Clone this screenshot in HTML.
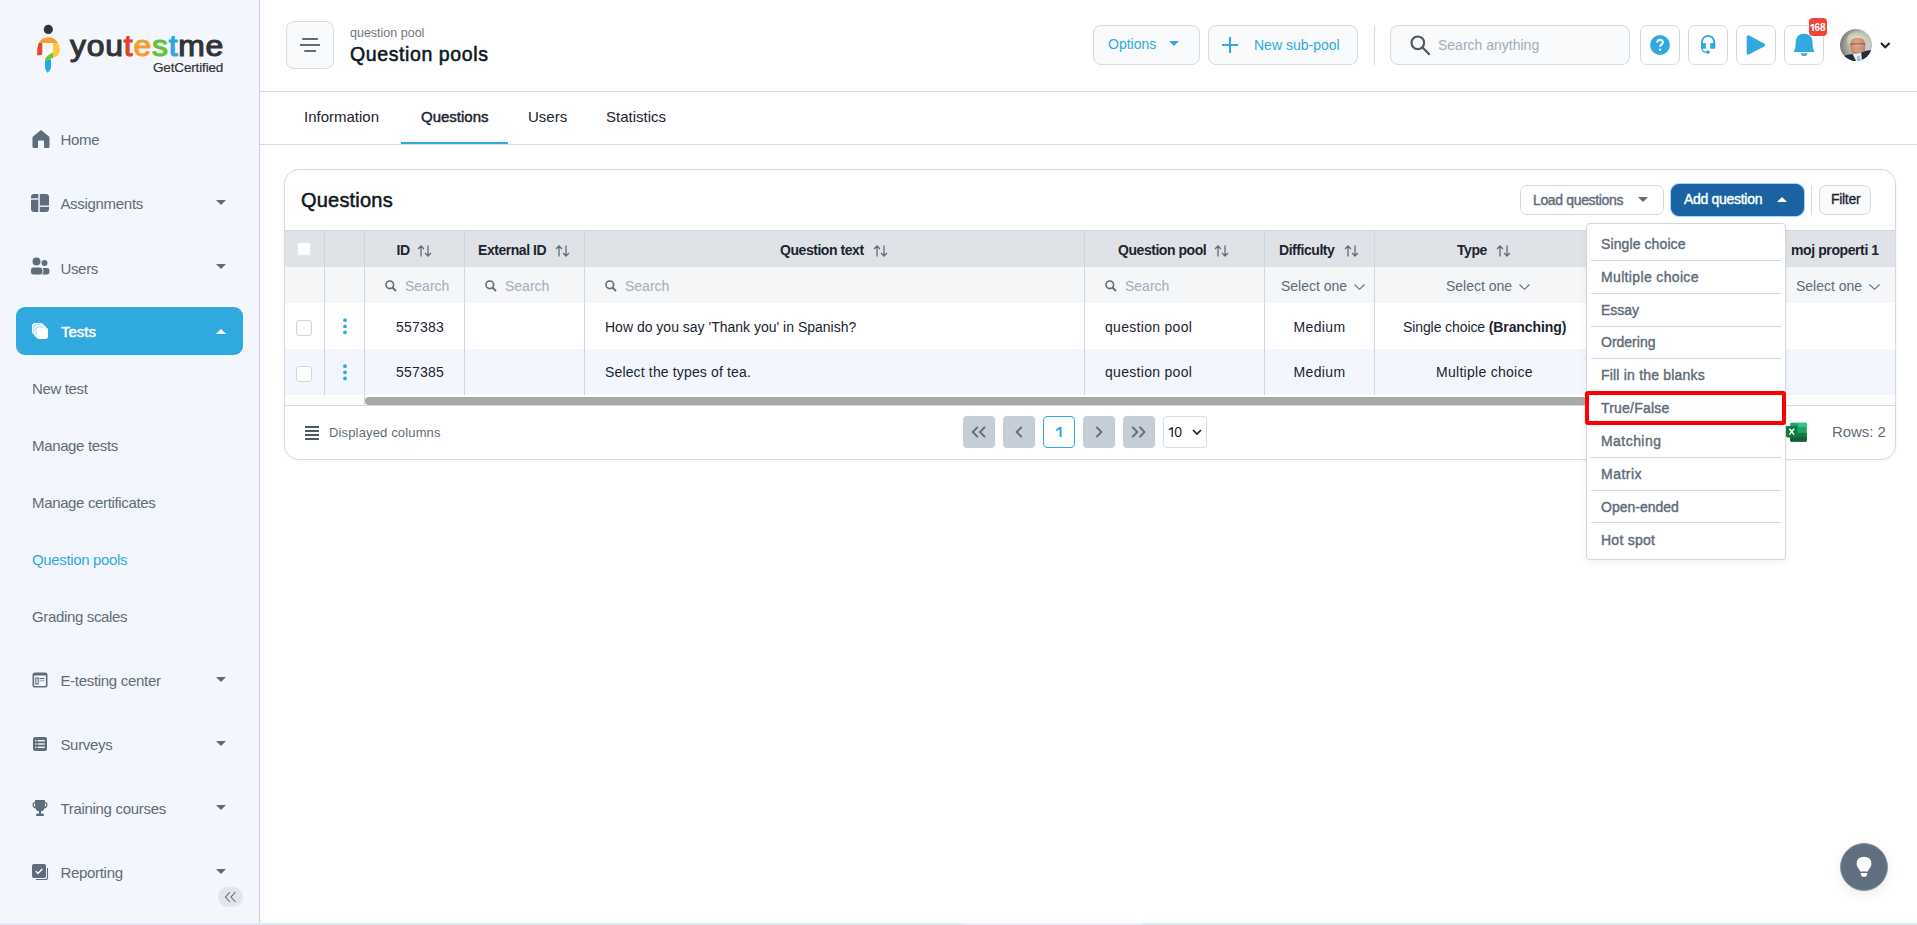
<!DOCTYPE html>
<html><head><meta charset="utf-8"><style>
*{box-sizing:border-box;margin:0;padding:0}
html,body{width:1917px;height:925px;overflow:hidden;background:#fff;font-family:"Liberation Sans",sans-serif;color:#1b2430}
.a{position:absolute;white-space:nowrap}
.t{position:absolute;white-space:nowrap;line-height:1}
svg{position:absolute;overflow:visible}
</style></head><body>
<div class="a" style="left:0;top:0;width:260px;height:923px;background:#f3f7fd;border-right:1px solid #c5cfd9"></div>
<svg style="left:0;top:0" width="260" height="90" viewBox="0 0 260 90">
<circle cx="48.3" cy="29.4" r="4.6" fill="#333"/>
<path d="M38.5 43.5 Q41 37.2 48.5 37.2 Q55 37.2 58 43 L53 43 L41.5 43 Z" fill="#f9a03a"/>
<path d="M38.6 43 L42.3 43 L42.3 53 Q42.3 55.3 40 55.3 L37.2 55.3 Q36.8 48 38.6 43 Z" fill="#e34a2a"/>
<path d="M53 43 L58 43 Q60 46 59.9 50 Q59.6 56 53 57.8 Z" fill="#fdc940"/>
<path d="M45 61 Q45 56 53 52.6 L53 57.8 Q50 59 48.6 60.5 L45 61.5 Z" fill="#6cc93b"/>
<path d="M45 61.3 L51 59.2 L51 67 Q50.5 70.5 47.8 73 Q45 70 45 67 Z" fill="#2aa6e3"/>
</svg>
<div class="t" style="left:70px;top:31.6px;font-size:29px;-webkit-text-stroke:1.1px currentColor;letter-spacing:0.7px;transform:scaleX(1.1);transform-origin:0 0;color:#343434">you<span style="color:#dc4429;-webkit-text-stroke:1.1px #dc4429">t</span><span style="color:#f99c2f;-webkit-text-stroke:1.1px #f99c2f">e</span><span style="color:#62c436;-webkit-text-stroke:1.1px #62c436">s</span><span style="color:#2ba7e2;-webkit-text-stroke:1.1px #2ba7e2">t</span>me</div>
<div class="t" style="left:153px;top:60.6px;font-size:13.5px;letter-spacing:-0.15px;-webkit-text-stroke:0.2px #333;color:#333">GetCertified</div>
<div class="t" style="left:60.4px;top:132.3px;font-size:15px;letter-spacing:-0.3px;color:#5f6c7a">Home</div>
<div class="t" style="left:60.4px;top:196.3px;font-size:15px;letter-spacing:-0.3px;color:#5f6c7a">Assignments</div>
<svg style="left:216px;top:200px" width="10" height="5"><path d="M0 0 L10 0 L5.0 5 Z" fill="#5f6c7a"/></svg>
<div class="t" style="left:60.4px;top:260.8px;font-size:15px;letter-spacing:-0.3px;color:#5f6c7a">Users</div>
<svg style="left:216px;top:264px" width="10" height="5"><path d="M0 0 L10 0 L5.0 5 Z" fill="#5f6c7a"/></svg>
<div class="t" style="left:60.4px;top:673.3px;font-size:15px;letter-spacing:-0.3px;color:#5f6c7a">E-testing center</div>
<svg style="left:216px;top:677px" width="10" height="5"><path d="M0 0 L10 0 L5.0 5 Z" fill="#5f6c7a"/></svg>
<div class="t" style="left:60.4px;top:737.3px;font-size:15px;letter-spacing:-0.3px;color:#5f6c7a">Surveys</div>
<svg style="left:216px;top:741px" width="10" height="5"><path d="M0 0 L10 0 L5.0 5 Z" fill="#5f6c7a"/></svg>
<div class="t" style="left:60.4px;top:801.3px;font-size:15px;letter-spacing:-0.3px;color:#5f6c7a">Training courses</div>
<svg style="left:216px;top:805px" width="10" height="5"><path d="M0 0 L10 0 L5.0 5 Z" fill="#5f6c7a"/></svg>
<div class="t" style="left:60.4px;top:865.3px;font-size:15px;letter-spacing:-0.3px;color:#5f6c7a">Reporting</div>
<svg style="left:216px;top:869px" width="10" height="5"><path d="M0 0 L10 0 L5.0 5 Z" fill="#5f6c7a"/></svg>
<div class="a" style="left:16px;top:307px;width:227px;height:48px;background:#2fa9de;border-radius:9px"></div>
<div class="t" style="left:61px;top:323.6px;font-size:15px;-webkit-text-stroke:0.45px #fff;letter-spacing:0px;color:#fff">Tests</div>
<svg style="left:216px;top:329px" width="10" height="5"><path d="M0 5 L5.0 0 L10 5 Z" fill="#fff"/></svg>
<div class="t" style="left:32px;top:381.3px;font-size:15px;letter-spacing:-0.35px;color:#5f6c7a">New test</div>
<div class="t" style="left:32px;top:438.3px;font-size:15px;letter-spacing:-0.35px;color:#5f6c7a">Manage tests</div>
<div class="t" style="left:32px;top:495.3px;font-size:15px;letter-spacing:-0.35px;color:#5f6c7a">Manage certificates</div>
<div class="t" style="left:32px;top:552.3px;font-size:15px;letter-spacing:-0.35px;color:#2fa9de">Question pools</div>
<div class="t" style="left:32px;top:609.3px;font-size:15px;letter-spacing:-0.35px;color:#5f6c7a">Grading scales</div>
<svg style="left:32px;top:129px" width="18" height="20" viewBox="0 0 18 20"><path d="M9 1 L17 7.5 Q17.5 8 17.5 9 L17.5 17.5 Q17.5 19 16 19 L13 19 Q12 19 12 18 L12 12.5 Q12 11.5 11 11.5 L7 11.5 Q6 11.5 6 12.5 L6 18 Q6 19 5 19 L2 19 Q0.5 19 0.5 17.5 L0.5 9 Q0.5 8 1 7.5 Z" fill="#5f6c7a"/></svg>
<svg style="left:31px;top:194px" width="18" height="18" viewBox="0 0 18 18"><rect x="0" y="0" width="18" height="18" rx="3" fill="#5f6c7a"/><rect x="7.3" y="0" width="1.5" height="18" fill="#f3f7fd"/><rect x="0" y="4.3" width="7.3" height="1.4" fill="#f3f7fd"/><rect x="8.8" y="11.5" width="9.2" height="1.4" fill="#f3f7fd"/></svg>
<svg style="left:30px;top:257px" width="20" height="19" viewBox="0 0 20 19"><circle cx="6.5" cy="4.5" r="4" fill="#5f6c7a"/><circle cx="14.5" cy="6" r="3" fill="#5f6c7a"/><path d="M11 11 L17 11 Q19.5 11 19.5 14 Q19.5 17.5 17 17.5 L12 17.5 Z" fill="#5f6c7a"/><path d="M3 10 L10 10 Q13 10 13 13.5 Q13 18 10 18 L3 18 Q0.3 18 0.3 14 Q0.3 10 3 10 Z" fill="#5f6c7a" stroke="#f3f7fd" stroke-width="1"/></svg>
<svg style="left:31px;top:322px" width="18" height="18" viewBox="0 0 18 18"><rect x="1.6" y="1.6" width="10.5" height="10.5" rx="2.5" fill="#9fd6ef" stroke="#fff" stroke-width="1.3"/><rect x="3.9" y="3.9" width="10.5" height="10.5" rx="2.5" fill="#9fd6ef" stroke="#fff" stroke-width="1.3"/><rect x="5.5" y="5.5" width="11.5" height="11.5" rx="2.5" fill="#fff"/></svg>
<svg style="left:32px;top:672px" width="16" height="16" viewBox="0 0 16 16"><rect x="1.3" y="1.3" width="13.4" height="13.4" rx="1.8" fill="none" stroke="#5f6c7a" stroke-width="1.6"/><rect x="1.3" y="1.3" width="13.4" height="2.2" fill="#5f6c7a"/><rect x="3.8" y="6" width="2.4" height="6" fill="none" stroke="#5f6c7a" stroke-width="1.1"/><rect x="7.5" y="6" width="5" height="1.1" fill="#5f6c7a"/><rect x="7.5" y="8.2" width="5" height="1.1" fill="#5f6c7a" opacity="0.6"/></svg>
<svg style="left:32px;top:736px" width="16" height="16" viewBox="0 0 16 16"><rect x="1" y="1" width="14" height="14" rx="2" fill="#5f6c7a"/><g fill="#f3f7fd"><rect x="3.2" y="4" width="1.4" height="1.4"/><rect x="3.2" y="7.3" width="1.4" height="1.4"/><rect x="3.2" y="10.6" width="1.4" height="1.4"/><rect x="5.8" y="4" width="7" height="1.4"/><rect x="5.8" y="7.3" width="7" height="1.4"/><rect x="5.8" y="10.6" width="7" height="1.4"/></g></svg>
<svg style="left:32px;top:799px" width="16" height="18" viewBox="0 0 16 18"><path d="M3 1 L13 1 L13 3 Q15.5 3 15.5 5 Q15.5 9 12.5 9.5 Q11.5 12 9 12.5 L9 14.5 L10.5 14.5 Q12 14.5 12 16 L12 17 L4 17 L4 16 Q4 14.5 5.5 14.5 L7 14.5 L7 12.5 Q4.5 12 3.5 9.5 Q0.5 9 0.5 5 Q0.5 3 3 3 Z" fill="#5f6c7a"/><path d="M3 4.3 Q1.8 4.3 1.8 5.2 Q1.8 7.5 3.2 8 Z M13 4.3 Q14.2 4.3 14.2 5.2 Q14.2 7.5 12.8 8 Z" fill="#f3f7fd"/></svg>
<svg style="left:32px;top:864px" width="17" height="17" viewBox="0 0 17 17"><path d="M4 15.5 L13.5 15.5 Q15.5 15.5 15.5 13.5 L15.5 4" fill="none" stroke="#5f6c7a" stroke-width="1.1"/><rect x="0" y="0" width="14" height="14" rx="2" fill="#5f6c7a"/><path d="M3.8 7.2 L6 9.4 L10.2 5" fill="none" stroke="#fff" stroke-width="1.5"/></svg>
<div class="a" style="left:218px;top:887px;width:25px;height:20px;background:#e1e6eb;border-radius:10px"></div>
<svg style="left:224px;top:891px" width="13" height="12" viewBox="0 0 13 12"><path d="M6 1 L1.5 6 L6 11 M11.5 1 L7 6 L11.5 11" fill="none" stroke="#5f6c7a" stroke-width="1.1"/></svg>
<div class="a" style="left:0;top:923px;width:1917px;height:2px;background:#e1e9f6"></div>
<div class="a" style="left:964px;top:923px;width:179px;height:2px;background:#eceff8"></div>
<div class="a" style="left:260px;top:91px;width:1657px;height:1px;background:#d3dbe3"></div>
<div class="a" style="left:286px;top:21px;width:48px;height:48px;border:1px solid #d3dbe3;border-radius:8px;background:#f8fafc"></div>
<svg style="left:300px;top:37px" width="21" height="16"><rect x="2.3" y="1" width="15.6" height="2" fill="#5f6c7a"/><rect x="0" y="7" width="20" height="2" fill="#5f6c7a"/><rect x="4.3" y="13" width="11.6" height="2" fill="#5f6c7a"/></svg>
<div class="t" style="left:350px;top:27.2px;font-size:12.5px;color:#6b7784">question pool</div>
<div class="t" style="left:350px;top:44.8px;font-size:19.5px;-webkit-text-stroke:0.55px #0f1720;letter-spacing:0.6px;color:#0f1720">Question pools</div>
<div class="a" style="left:1093px;top:25px;width:107px;height:40px;border:1px solid #d3dbe3;border-radius:8px;background:#f8fafc"></div>
<div class="t" style="left:1108px;top:37.1px;font-size:14px;color:#2fa9de">Options</div>
<svg style="left:1169px;top:41px" width="10" height="5"><path d="M0 0 L10 0 L5 5 Z" fill="#2fa9de"/></svg>
<div class="a" style="left:1208px;top:25px;width:150px;height:40px;border:1px solid #d3dbe3;border-radius:8px;background:#f8fafc"></div>
<svg style="left:1222px;top:37px" width="16" height="16"><rect x="7" y="0" width="2" height="16" fill="#2fa9de"/><rect x="0" y="7" width="16" height="2" fill="#2fa9de"/></svg>
<div class="t" style="left:1254px;top:38.1px;font-size:14px;color:#2fa9de">New sub-pool</div>
<div class="a" style="left:1374px;top:25px;width:1px;height:40px;background:#d3dbe3"></div>
<div class="a" style="left:1390px;top:25px;width:240px;height:40px;border:1px solid #d3dbe3;border-radius:8px;background:#f8fafc"></div>
<svg style="left:1410px;top:35px" width="20" height="20"><circle cx="7.8" cy="7.8" r="6.3" fill="none" stroke="#4d5966" stroke-width="2.2"/><path d="M12.5 12.5 L19 19" stroke="#4d5966" stroke-width="2.4" stroke-linecap="round"/></svg>
<div class="t" style="left:1438px;top:37.6px;font-size:14px;color:#a3adb8">Search anything</div>
<div class="a" style="left:1640px;top:25px;width:40px;height:40px;border:1px solid #d3dbe3;border-radius:7px;background:#fff"></div>
<div class="a" style="left:1688px;top:25px;width:40px;height:40px;border:1px solid #d3dbe3;border-radius:7px;background:#fff"></div>
<div class="a" style="left:1736px;top:25px;width:40px;height:40px;border:1px solid #d3dbe3;border-radius:7px;background:#fff"></div>
<div class="a" style="left:1784px;top:25px;width:40px;height:40px;border:1px solid #d3dbe3;border-radius:7px;background:#fff"></div>
<svg style="left:1650px;top:35px" width="20" height="20"><circle cx="10" cy="10" r="9.9" fill="#2fa9de"/><path d="M7.3 7.6 Q7.3 4.8 10 4.8 Q12.8 4.8 12.8 7.4 Q12.8 8.8 11.3 9.6 Q10.1 10.3 10.1 11.8" fill="none" stroke="#fff" stroke-width="1.9"/><circle cx="10.1" cy="14.7" r="1.2" fill="#fff"/></svg>
<svg style="left:1700px;top:34px" width="17" height="22"><path d="M2 14 L2 8 A6.1 6.1 0 0 1 14.2 8 L14.2 14" fill="none" stroke="#2fa9de" stroke-width="1.9"/><rect x="1" y="9" width="4.9" height="5.8" rx="0.8" fill="#2fa9de"/><rect x="10.2" y="9" width="5" height="5.8" rx="0.8" fill="#2fa9de"/><path d="M2 14 Q2 18.3 6.5 18.2" fill="none" stroke="#2fa9de" stroke-width="1.3"/><circle cx="7.9" cy="18.1" r="1.9" fill="#2fa9de"/></svg>
<svg style="left:1746px;top:34px" width="21" height="22"><path d="M0.7 3.2 Q0.7 0.3 3.3 1.6 L18.1 9.4 Q20.2 10.95 18.1 12.5 L3.3 20.3 Q0.7 21.6 0.7 18.7 Z" fill="#2fa9de"/></svg>
<svg style="left:1793px;top:33px" width="23" height="24"><path d="M11.1 0.8 Q19.4 0.8 19.6 10 L19.7 14 Q19.9 16.3 21.2 17.4 L21.2 19.1 L1 19.1 L1 17.4 Q2.3 16.3 2.5 14 L2.6 10 Q2.8 0.8 11.1 0.8 Z" fill="#2fa9de"/><path d="M7.7 20.2 L14.6 20.2 Q14 23.1 11.15 23.1 Q8.3 23.1 7.7 20.2 Z" fill="#2fa9de"/></svg>
<div class="a" style="left:1809px;top:18px;width:18px;height:18px;background:#f44336;border-radius:4px"></div>
<div class="t" style="left:1814.6px;top:22.5px;font-size:10px;font-weight:bold;letter-spacing:-0.2px;color:#fff">68</div>
<svg style="left:1809px;top:18px" width="8" height="18"><path d="M3.2 6 L3.7 6 L4.9 6 L4.9 13 L3.2 13 L3.2 8 L1.3 8.7 L1.3 7.3 Z" fill="#fff"/></svg>
<svg style="left:1840px;top:29px" width="32" height="32" viewBox="0 0 32 32"><defs><radialGradient id="avbg" cx="0.7" cy="0.5" r="0.8"><stop offset="0" stop-color="#dcdcda"/><stop offset="0.55" stop-color="#b4b4b1"/><stop offset="1" stop-color="#5e5e5b"/></radialGradient><radialGradient id="avf" cx="0.45" cy="0.4" r="0.65"><stop offset="0" stop-color="#e2ae96"/><stop offset="1" stop-color="#b87c66"/></radialGradient><clipPath id="avc"><circle cx="16" cy="16" r="16"/></clipPath></defs>
<g clip-path="url(#avc)"><rect width="32" height="32" fill="url(#avbg)"/>
<path d="M7 12 Q6.5 3.5 16.5 3.8 Q26.5 4 27 12.5 L25 16 L9 16 Z" fill="#cfc8b2"/>
<ellipse cx="17.8" cy="17" rx="7.8" ry="9.2" fill="url(#avf)"/>
<path d="M9 10.5 Q10.5 6.3 17 6.2 Q24 6.2 26 11 Q22 8.8 17 9 Q12.5 9 9 10.5 Z" fill="#dad3bf"/>
<path d="M10 14.5 Q17.5 13.2 25.5 14.2 L25.5 15.8 Q17.5 15 10 16.2 Z" fill="#6e4e40" opacity="0.5"/>
<path d="M14.5 21.3 Q18.5 23.3 22 21" stroke="#f2dcd0" stroke-width="0.8" fill="none" opacity="0.6"/>
<path d="M-1 32 L1 28 Q7 25.5 12.5 25 L16 27.5 L21 24 Q27 20.5 31 21.5 L34 32 Z" fill="#262b35"/>
<path d="M12.8 25.3 L16 32 L22 32 L21.2 23.8 Z" fill="#eeeeec"/>
<path d="M17.2 27.3 L19.6 26.6 L20.6 32 L17.3 32 Z" fill="#9dbde6"/>
</g></svg>
<svg style="left:1880px;top:42px" width="11" height="7"><path d="M1 1 L5.3 5.3 L9.6 1" fill="none" stroke="#1b2430" stroke-width="2"/></svg>
<div class="a" style="left:260px;top:144px;width:1657px;height:1px;background:#d3dbe3"></div>
<div class="t" style="left:304px;top:109.4px;font-size:15px;color:#1b2430">Information</div>
<div class="t" style="left:421px;top:109.4px;font-size:15px;-webkit-text-stroke:0.45px #1b2430;letter-spacing:0px;color:#1b2430">Questions</div>
<div class="t" style="left:528px;top:109.4px;font-size:15px;color:#1b2430">Users</div>
<div class="t" style="left:606px;top:109.4px;font-size:15px;color:#1b2430">Statistics</div>
<div class="a" style="left:401px;top:142px;width:107px;height:2px;background:#2fa9de"></div>
<div class="a" style="left:284px;top:169px;width:1612px;height:291px;border:1px solid #d3dbe3;border-radius:15px;background:#fff;box-shadow:0 1px 3px rgba(60,80,100,0.06)"></div>
<div class="t" style="left:301px;top:190.1px;font-size:20px;-webkit-text-stroke:0.5px #0f1720;letter-spacing:0.2px;color:#0f1720">Questions</div>
<div class="a" style="left:1520px;top:185px;width:144px;height:30px;border:1px solid #d3dbe3;border-radius:7px;background:#fff"></div>
<div class="t" style="left:1533px;top:193.1px;font-size:14px;-webkit-text-stroke:0.4px #5f6c7a;letter-spacing:-0.35px;color:#5f6c7a">Load questions</div>
<svg style="left:1638px;top:197px" width="10" height="5"><path d="M0 0 L10 0 L5 5 Z" fill="#5f6c7a"/></svg>
<div class="a" style="left:1671px;top:184px;width:133px;height:32px;border-radius:8px;background:#1a63a0;border:1px solid #0f5fd0;box-shadow:0 0 0 1px rgba(120,165,235,0.55)"></div>
<div class="t" style="left:1684px;top:192.4px;font-size:14px;-webkit-text-stroke:0.4px #fff;letter-spacing:-0.3px;color:#fff">Add question</div>
<svg style="left:1777px;top:197px" width="10" height="5"><path d="M0 5 L5 0 L10 5 Z" fill="#fff"/></svg>
<div class="a" style="left:1811px;top:186px;width:1px;height:29px;background:#d3dbe3"></div>
<div class="a" style="left:1819px;top:185px;width:52px;height:30px;border:1px solid #d3dbe3;border-radius:7px;background:#f8fafc"></div>
<div class="t" style="left:1831px;top:192.4px;font-size:14px;-webkit-text-stroke:0.3px #1b2430;letter-spacing:-0.3px;color:#1b2430">Filter</div>
<div class="a" style="left:285px;top:230px;width:1610px;height:37px;background:#dfe3e8;border-top:1px solid #d0d7df"></div>
<div class="a" style="left:285px;top:267px;width:1610px;height:36px;background:#f4f6f8"></div>
<div class="a" style="left:285px;top:303px;width:1610px;height:46px;background:#fff"></div>
<div class="a" style="left:285px;top:349px;width:1610px;height:46px;background:#f3f7fd"></div>
<div class="a" style="left:324px;top:230px;width:1px;height:165px;background:#cfd8e1"></div>
<div class="a" style="left:364px;top:230px;width:1px;height:165px;background:#cfd8e1"></div>
<div class="a" style="left:464px;top:230px;width:1px;height:165px;background:#cfd8e1"></div>
<div class="a" style="left:584px;top:230px;width:1px;height:165px;background:#cfd8e1"></div>
<div class="a" style="left:1084px;top:230px;width:1px;height:165px;background:#cfd8e1"></div>
<div class="a" style="left:1264px;top:230px;width:1px;height:165px;background:#cfd8e1"></div>
<div class="a" style="left:1374px;top:230px;width:1px;height:165px;background:#cfd8e1"></div>
<div class="a" style="left:364px;top:395px;width:1px;height:10px;background:#cfd8e1"></div>
<div class="a" style="left:285px;top:405px;width:1610px;height:1px;background:#d3dbe3"></div>
<div class="a" style="left:365px;top:397px;width:1240px;height:8px;background:#a8a8a8;border-radius:4px"></div>
<div class="a" style="left:297px;top:242px;width:14px;height:14px;background:#fff;border:1px solid #e3e8ed;border-radius:3px"></div>
<div class="t" style="left:396.5px;top:243.4px;font-size:14px;font-weight:bold;letter-spacing:-0.45px;color:#1b2430">ID</div>
<svg style="left:416.5px;top:244.5px" width="15" height="12" viewBox="0 0 15 12"><path d="M4 11.5 L4 1 M1 4 L4 1 L7 4 M11 0.5 L11 11 M8 8 L11 11 L14 8" fill="none" stroke="#5f6c7a" stroke-width="1.3"/></svg>
<div class="t" style="left:478px;top:243.4px;font-size:14px;font-weight:bold;letter-spacing:-0.45px;color:#1b2430">External ID</div>
<svg style="left:554.5px;top:244.5px" width="15" height="12" viewBox="0 0 15 12"><path d="M4 11.5 L4 1 M1 4 L4 1 L7 4 M11 0.5 L11 11 M8 8 L11 11 L14 8" fill="none" stroke="#5f6c7a" stroke-width="1.3"/></svg>
<div class="t" style="left:780px;top:243.4px;font-size:14px;font-weight:bold;letter-spacing:-0.45px;color:#1b2430">Question text</div>
<svg style="left:873px;top:244.5px" width="15" height="12" viewBox="0 0 15 12"><path d="M4 11.5 L4 1 M1 4 L4 1 L7 4 M11 0.5 L11 11 M8 8 L11 11 L14 8" fill="none" stroke="#5f6c7a" stroke-width="1.3"/></svg>
<div class="t" style="left:1118px;top:243.4px;font-size:14px;font-weight:bold;letter-spacing:-0.45px;color:#1b2430">Question pool</div>
<svg style="left:1214px;top:244.5px" width="15" height="12" viewBox="0 0 15 12"><path d="M4 11.5 L4 1 M1 4 L4 1 L7 4 M11 0.5 L11 11 M8 8 L11 11 L14 8" fill="none" stroke="#5f6c7a" stroke-width="1.3"/></svg>
<div class="t" style="left:1279px;top:243.4px;font-size:14px;font-weight:bold;letter-spacing:-0.45px;color:#1b2430">Difficulty</div>
<svg style="left:1343.5px;top:244.5px" width="15" height="12" viewBox="0 0 15 12"><path d="M4 11.5 L4 1 M1 4 L4 1 L7 4 M11 0.5 L11 11 M8 8 L11 11 L14 8" fill="none" stroke="#5f6c7a" stroke-width="1.3"/></svg>
<div class="t" style="left:1457px;top:243.4px;font-size:14px;font-weight:bold;letter-spacing:-0.45px;color:#1b2430">Type</div>
<svg style="left:1495.5px;top:244.5px" width="15" height="12" viewBox="0 0 15 12"><path d="M4 11.5 L4 1 M1 4 L4 1 L7 4 M11 0.5 L11 11 M8 8 L11 11 L14 8" fill="none" stroke="#5f6c7a" stroke-width="1.3"/></svg>
<div class="t" style="left:1791px;top:243.1px;font-size:14px;font-weight:bold;letter-spacing:-0.4px;color:#1b2430">moj properti 1</div>
<svg style="left:385px;top:280px" width="12" height="12"><circle cx="4.8" cy="4.8" r="3.8" fill="none" stroke="#5f6c7a" stroke-width="1.6"/><path d="M7.6 7.6 L11 11" stroke="#5f6c7a" stroke-width="1.8"/></svg>
<div class="t" style="left:405px;top:279.1px;font-size:14px;color:#a3adb8">Search</div>
<svg style="left:485px;top:280px" width="12" height="12"><circle cx="4.8" cy="4.8" r="3.8" fill="none" stroke="#5f6c7a" stroke-width="1.6"/><path d="M7.6 7.6 L11 11" stroke="#5f6c7a" stroke-width="1.8"/></svg>
<div class="t" style="left:505px;top:279.1px;font-size:14px;color:#a3adb8">Search</div>
<svg style="left:605px;top:280px" width="12" height="12"><circle cx="4.8" cy="4.8" r="3.8" fill="none" stroke="#5f6c7a" stroke-width="1.6"/><path d="M7.6 7.6 L11 11" stroke="#5f6c7a" stroke-width="1.8"/></svg>
<div class="t" style="left:625px;top:279.1px;font-size:14px;color:#a3adb8">Search</div>
<svg style="left:1105px;top:280px" width="12" height="12"><circle cx="4.8" cy="4.8" r="3.8" fill="none" stroke="#5f6c7a" stroke-width="1.6"/><path d="M7.6 7.6 L11 11" stroke="#5f6c7a" stroke-width="1.8"/></svg>
<div class="t" style="left:1125px;top:279.1px;font-size:14px;color:#a3adb8">Search</div>
<div class="t" style="left:1281px;top:279.1px;font-size:14px;color:#5f6c7a">Select one</div>
<svg style="left:1353.5px;top:283.5px" width="11" height="6"><path d="M0.5 0.5 L5.5 5.3 L10.5 0.5" fill="none" stroke="#5f6c7a" stroke-width="1.1"/></svg>
<div class="t" style="left:1446px;top:279.1px;font-size:14px;color:#5f6c7a">Select one</div>
<svg style="left:1518.5px;top:283.5px" width="11" height="6"><path d="M0.5 0.5 L5.5 5.3 L10.5 0.5" fill="none" stroke="#5f6c7a" stroke-width="1.1"/></svg>
<div class="t" style="left:1796px;top:279.1px;font-size:14px;color:#5f6c7a">Select one</div>
<svg style="left:1868.5px;top:283.5px" width="11" height="6"><path d="M0.5 0.5 L5.5 5.3 L10.5 0.5" fill="none" stroke="#5f6c7a" stroke-width="1.1"/></svg>
<div class="a" style="left:296px;top:320px;width:16px;height:16px;background:#fff;border:1px solid #cfd8e1;border-radius:3px"></div>
<svg style="left:342px;top:318px" width="6" height="18"><circle cx="3" cy="2.2" r="1.9" fill="#2fa9de"/><circle cx="3" cy="8.3" r="1.9" fill="#2fa9de"/><circle cx="3" cy="14.4" r="1.9" fill="#2fa9de"/></svg>
<div class="t" style="left:396px;top:320.1px;font-size:14px;letter-spacing:0.2px;color:#1b2430">557383</div>
<div class="t" style="left:605px;top:320.1px;font-size:14px;letter-spacing:0px;color:#1b2430">How do you say 'Thank you' in Spanish?</div>
<div class="t" style="left:1105px;top:320.1px;font-size:14px;letter-spacing:0.3px;color:#1b2430">question pool</div>
<div class="t" style="left:1293.5px;top:320.1px;font-size:14px;letter-spacing:0.35px;color:#1b2430">Medium</div>
<div class="t" style="left:1403px;top:320.1px;font-size:14px;letter-spacing:-0.1px;color:#1b2430">Single choice <b>(Branching)</b></div>
<div class="a" style="left:296px;top:366px;width:16px;height:16px;background:#fff;border:1px solid #cfd8e1;border-radius:3px"></div>
<svg style="left:342px;top:364px" width="6" height="18"><circle cx="3" cy="2.2" r="1.9" fill="#2fa9de"/><circle cx="3" cy="8.3" r="1.9" fill="#2fa9de"/><circle cx="3" cy="14.4" r="1.9" fill="#2fa9de"/></svg>
<div class="t" style="left:396px;top:365.1px;font-size:14px;letter-spacing:0.2px;color:#1b2430">557385</div>
<div class="t" style="left:605px;top:365.1px;font-size:14px;letter-spacing:0.15px;color:#1b2430">Select the types of tea.</div>
<div class="t" style="left:1105px;top:365.1px;font-size:14px;letter-spacing:0.3px;color:#1b2430">question pool</div>
<div class="t" style="left:1293.5px;top:365.1px;font-size:14px;letter-spacing:0.35px;color:#1b2430">Medium</div>
<div class="t" style="left:1436px;top:365.1px;font-size:14px;letter-spacing:0.28px;color:#1b2430">Multiple choice</div>
<svg style="left:305px;top:426px" width="14" height="14"><rect x="0" y="0" width="14" height="2" fill="#4d5966"/><rect x="0" y="4" width="14" height="2" fill="#4d5966"/><rect x="0" y="8" width="14" height="2" fill="#4d5966"/><rect x="0" y="12" width="14" height="2" fill="#4d5966"/></svg>
<div class="t" style="left:329px;top:426.0px;font-size:13px;letter-spacing:0.15px;color:#5f6c7a">Displayed columns</div>
<div class="a" style="left:963px;top:416px;width:32px;height:32px;border-radius:4px;background:#c5ced7"></div>
<svg style="left:963px;top:416px" width="32" height="32"><path d="M14.8 10.9 L9.8 16 L14.8 21.1 M22 10.9 L17 16 L22 21.1" fill="none" stroke="#5f6c7a" stroke-width="1.9"/></svg>
<div class="a" style="left:1003px;top:416px;width:32px;height:32px;border-radius:4px;background:#c5ced7"></div>
<svg style="left:1003px;top:416px" width="32" height="32"><path d="M18.8 10.9 L13.6 16 L18.8 21.1" fill="none" stroke="#5f6c7a" stroke-width="1.9"/></svg>
<div class="a" style="left:1043px;top:416px;width:32px;height:32px;border:1px solid #2fa9de;border-radius:4px;background:#fff"></div>
<svg style="left:1043px;top:416px" width="32" height="32"><path d="M16.6 11 L18.6 11 L18.6 21.1 L16.6 21.1 L16.6 13.6 L13 14.9 L13 13.2 Z" fill="#2fa9de"/></svg>
<div class="a" style="left:1083px;top:416px;width:32px;height:32px;border-radius:4px;background:#c5ced7"></div>
<svg style="left:1083px;top:416px" width="32" height="32"><path d="M13.3 10.9 L18.5 16 L13.3 21.1" fill="none" stroke="#5f6c7a" stroke-width="1.9"/></svg>
<div class="a" style="left:1123px;top:416px;width:32px;height:32px;border-radius:4px;background:#c5ced7"></div>
<svg style="left:1123px;top:416px" width="32" height="32"><path d="M9.3 10.9 L14.3 16 L9.3 21.1 M16.5 10.9 L21.5 16 L16.5 21.1" fill="none" stroke="#5f6c7a" stroke-width="1.9"/></svg>
<div class="a" style="left:1163px;top:416px;width:44px;height:32px;border:1px solid #d3dbe3;border-radius:4px;background:#fff"></div>
<div class="t" style="left:1174.3px;top:425.1px;font-size:14px;color:#1b2430">0</div>
<svg style="left:1163px;top:416px" width="20" height="32"><path d="M8.6 11.2 L9.9 11.2 L9.9 21 L8.6 21 L8.6 13.3 L5.8 14.3 L5.8 13.1 Z" fill="#1b2430"/></svg>
<svg style="left:1192px;top:429px" width="10" height="7"><path d="M1 1 L5 5 L9 1" fill="none" stroke="#1b2430" stroke-width="1.7"/></svg>
<svg style="left:1786px;top:421px" width="22" height="22" viewBox="0 0 22 22"><path d="M5.5 1.8 Q4.2 1.8 4.2 3 L4.2 19.6 Q4.2 20.8 5.5 20.8 L19.6 20.8 Q20.8 20.8 20.8 19.6 L20.8 3 Q20.8 1.8 19.6 1.8 Z" fill="#21a366"/><path d="M12.4 1.8 L19.6 1.8 Q20.8 1.8 20.8 3 L20.8 6 L12.4 6 Z" fill="#33c481"/><rect x="4.2" y="11.9" width="16.6" height="4.2" fill="#107c41"/><path d="M4.2 16 L20.8 16 L20.8 19.6 Q20.8 20.8 19.6 20.8 L5.5 20.8 Q4.2 20.8 4.2 19.6 Z" fill="#185c37"/><rect x="0" y="4.9" width="11.5" height="11.5" rx="1.3" fill="#107c41"/><path d="M3.4 7.7 L8.1 13.6 M8.1 7.7 L3.4 13.6" stroke="#fff" stroke-width="1.5"/></svg>
<div class="t" style="left:1832px;top:424.3px;font-size:15px;letter-spacing:-0.05px;color:#5f6c7a">Rows: 2</div>
<div class="a" style="left:1586px;top:223px;width:200px;height:337px;border:1px solid #cfd8e1;border-radius:4px;background:#fff;box-shadow:0 2px 6px rgba(0,0,0,0.06)"></div>
<div class="t" style="left:1601px;top:236.8px;font-size:14px;-webkit-text-stroke:0.4px #5f6c7a;letter-spacing:0.1px;color:#5f6c7a">Single choice</div>
<div class="a" style="left:1591px;top:260px;width:190px;height:1px;background:#cfd8e1"></div>
<div class="t" style="left:1601px;top:269.7px;font-size:14px;-webkit-text-stroke:0.4px #5f6c7a;letter-spacing:0.35px;color:#5f6c7a">Multiple choice</div>
<div class="a" style="left:1591px;top:293px;width:190px;height:1px;background:#cfd8e1"></div>
<div class="t" style="left:1601px;top:302.5px;font-size:14px;-webkit-text-stroke:0.4px #5f6c7a;letter-spacing:0px;color:#5f6c7a">Essay</div>
<div class="a" style="left:1591px;top:326px;width:190px;height:1px;background:#cfd8e1"></div>
<div class="t" style="left:1601px;top:335.4px;font-size:14px;-webkit-text-stroke:0.4px #5f6c7a;letter-spacing:0px;color:#5f6c7a">Ordering</div>
<div class="a" style="left:1591px;top:358px;width:190px;height:1px;background:#cfd8e1"></div>
<div class="t" style="left:1601px;top:368.2px;font-size:14px;-webkit-text-stroke:0.4px #5f6c7a;letter-spacing:0.2px;color:#5f6c7a">Fill in the blanks</div>
<div class="a" style="left:1591px;top:391px;width:190px;height:1px;background:#cfd8e1"></div>
<div class="t" style="left:1601px;top:401.1px;font-size:14px;-webkit-text-stroke:0.4px #5f6c7a;letter-spacing:0.2px;color:#5f6c7a">True/False</div>
<div class="a" style="left:1591px;top:424px;width:190px;height:1px;background:#cfd8e1"></div>
<div class="t" style="left:1601px;top:433.9px;font-size:14px;-webkit-text-stroke:0.4px #5f6c7a;letter-spacing:0.45px;color:#5f6c7a">Matching</div>
<div class="a" style="left:1591px;top:457px;width:190px;height:1px;background:#cfd8e1"></div>
<div class="t" style="left:1601px;top:466.8px;font-size:14px;-webkit-text-stroke:0.4px #5f6c7a;letter-spacing:0.5px;color:#5f6c7a">Matrix</div>
<div class="a" style="left:1591px;top:490px;width:190px;height:1px;background:#cfd8e1"></div>
<div class="t" style="left:1601px;top:499.6px;font-size:14px;-webkit-text-stroke:0.4px #5f6c7a;letter-spacing:0px;color:#5f6c7a">Open-ended</div>
<div class="a" style="left:1591px;top:522px;width:190px;height:1px;background:#cfd8e1"></div>
<div class="t" style="left:1601px;top:532.5px;font-size:14px;-webkit-text-stroke:0.4px #5f6c7a;letter-spacing:0.25px;color:#5f6c7a">Hot spot</div>
<div class="a" style="left:1585px;top:391px;width:201px;height:34px;border:4px solid #ff0000;border-radius:3px"></div>
<div class="a" style="left:1840px;top:843px;width:48px;height:48px;border-radius:50%;background:#5f6f7f;border:1px solid #8796a4;box-shadow:0 4px 12px rgba(0,0,0,0.08)"></div>
<svg style="left:1856px;top:856px" width="16" height="22"><path d="M8 0.8 Q15.4 0.8 15.4 8 Q15.4 10.6 13.6 12.6 Q12.2 14 11.8 15.6 L4.2 15.6 Q3.8 14 2.4 12.6 Q0.6 10.6 0.6 8 Q0.6 0.8 8 0.8 Z" fill="#fff"/><path d="M4.6 17 L11.4 17 L10.6 19.8 Q10.3 20.8 9.2 20.8 L6.8 20.8 Q5.7 20.8 5.4 19.8 Z" fill="#fff"/></svg>
</body></html>
